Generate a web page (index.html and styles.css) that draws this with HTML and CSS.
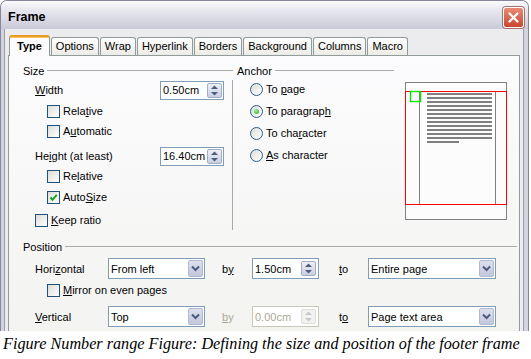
FILE: index.html
```
<!DOCTYPE html>
<html lang="en">
<head>
  <meta charset="UTF-8" />
  <title>Frame</title>
  <link rel="stylesheet" href="styles.css">
</head>
<body>

  <div class="dialog">
    <div class="titlebar">
      <span class="title">Frame</span>
      <span class="close">
        <svg width="19" height="19" viewBox="0 0 19 19"><path d="M5.5 5.5L13.5 13.5M13.5 5.5L5.5 13.5" stroke="#fff" stroke-width="2.2" stroke-linecap="round"/></svg>
      </span>
    </div>

    <div class="client">
      <!-- tab row -->
      <div class="tabs">
        <div class="tab active">Type</div>
        <div class="tab">Options</div>
        <div class="tab">Wrap</div>
        <div class="tab">Hyperlink</div>
        <div class="tab">Borders</div>
        <div class="tab">Background</div>
        <div class="tab">Columns</div>
        <div class="tab">Macro</div>
      </div>

      <div class="panel">
        <div class="top">

          <!-- Size -->
          <div class="size">
            <div class="legend"><span>Size</span><i></i></div>
            <div class="size-body">
              <div class="row">
                <span><u>W</u>idth</span>
                <div class="spin">0.50cm<span class="spin-btn"><svg width="9" height="13" viewBox="0 0 9 13"><path d="M1 5L4.5 1.5L8 5Z" /><path d="M1 8L4.5 11.5L8 8Z" /></svg></span></div>
              </div>
              <div class="row sub"><span class="check"></span><span>Rela<u>t</u>ive</span></div>
              <div class="row sub"><span class="check"></span><span>A<u>u</u>tomatic</span></div>
              <div class="row">
                <span>He<u>i</u>ght (at least)</span>
                <div class="spin">16.40cm<span class="spin-btn"><svg width="9" height="13" viewBox="0 0 9 13"><path d="M1 5L4.5 1.5L8 5Z" /><path d="M1 8L4.5 11.5L8 8Z" /></svg></span></div>
              </div>
              <div class="row sub"><span class="check"></span><span>Re<u>l</u>ative</span></div>
              <div class="row sub">
                <span class="check"><svg width="11" height="11" viewBox="0 0 11 11"><path d="M2.5 5.5L4.5 7.8L8.8 2.8" fill="none" stroke="#21a121" stroke-width="2"/></svg></span>
                <span>Auto<u>S</u>ize</span>
              </div>
              <div class="row"><span class="check"></span><span><u>K</u>eep ratio</span></div>
            </div>
          </div>

          <!-- Anchor -->
          <div class="anchor">
            <div class="legend"><span>Anchor</span><i></i></div>
            <div class="anchor-body">
              <div class="radio-row"><span class="radio"></span><span>To <u>p</u>age</span></div>
              <div class="radio-row"><span class="radio on"></span><span>To paragrap<u>h</u></span></div>
              <div class="radio-row"><span class="radio"></span><span>To cha<u>r</u>acter</span></div>
              <div class="radio-row"><span class="radio"></span><span><u>A</u>s character</span></div>
            </div>
          </div>

          <!-- page preview -->
          <div class="preview">
            <svg width="102" height="138" viewBox="0 0 102 138">
              <rect x="0.5" y="0.5" width="101" height="137" fill="#fcfcfc" stroke="#808080"/>
              <path d="M14.5 10V122M90.5 10V122" stroke="#808080"/>
              <g fill="#808080">
                <rect x="22" y="11" width="65" height="2"/>
                <rect x="22" y="15" width="65" height="2"/>
                <rect x="22" y="19" width="65" height="2"/>
                <rect x="22" y="23" width="65" height="2"/>
                <rect x="22" y="27" width="65" height="2"/>
                <rect x="22" y="31" width="65" height="2"/>
                <rect x="22" y="35" width="65" height="2"/>
                <rect x="22" y="39" width="65" height="2"/>
                <rect x="22" y="43" width="65" height="2"/>
                <rect x="22" y="47" width="65" height="2"/>
                <rect x="22" y="51" width="65" height="2"/>
                <rect x="22" y="55" width="65" height="2"/>
                <rect x="22" y="59" width="32" height="2"/>
              </g>
              <rect x="0.5" y="9.5" width="101" height="113" fill="none" stroke="#ff0000"/>
              <rect x="5.5" y="9.5" width="10" height="10" fill="none" stroke="#00e600" stroke-width="1.4"/>
            </svg>
          </div>
        </div>

        <!-- Position -->
        <div class="position">
          <div class="legend"><span>Position</span><i></i></div>
          <div class="pos-grid">
            <span>Hori<u>z</u>ontal</span>
            <div class="combo">From left<span class="dd-btn"><svg width="9" height="7" viewBox="0 0 9 7"><path d="M1 1.5L4.5 5L8 1.5" fill="none" stroke="#4a5a80" stroke-width="2"/></svg></span></div>
            <span class="by">b<u>y</u></span>
            <div class="spin">1.50cm<span class="spin-btn"><svg width="9" height="13" viewBox="0 0 9 13"><path d="M1 5L4.5 1.5L8 5Z" /><path d="M1 8L4.5 11.5L8 8Z" /></svg></span></div>
            <span class="to"><u>t</u>o</span>
            <div class="combo">Entire page<span class="dd-btn"><svg width="9" height="7" viewBox="0 0 9 7"><path d="M1 1.5L4.5 5L8 1.5" fill="none" stroke="#4a5a80" stroke-width="2"/></svg></span></div>

            <div class="mirror"><span class="check"></span><span><u>M</u>irror on even pages</span></div>

            <span><u>V</u>ertical</span>
            <div class="combo">Top<span class="dd-btn"><svg width="9" height="7" viewBox="0 0 9 7"><path d="M1 1.5L4.5 5L8 1.5" fill="none" stroke="#4a5a80" stroke-width="2"/></svg></span></div>
            <span class="by disabled"><u>b</u>y</span>
            <div class="spin disabled">0.00cm<span class="spin-btn"><svg width="9" height="13" viewBox="0 0 9 13"><path d="M1 5L4.5 1.5L8 5Z" /><path d="M1 8L4.5 11.5L8 8Z" /></svg></span></div>
            <span class="to">t<u>o</u></span>
            <div class="combo">Page text area<span class="dd-btn"><svg width="9" height="7" viewBox="0 0 9 7"><path d="M1 1.5L4.5 5L8 1.5" fill="none" stroke="#4a5a80" stroke-width="2"/></svg></span></div>
          </div>
        </div>
      </div>
    </div>
  </div>

  <p class="caption">Figure Number range Figure: Defining the size and position of the footer frame</p>

</body>
</html>
```

FILE: styles.css
```
body {
  margin: 0;
  background: #fff;
  font-family: "Liberation Sans", Arial, sans-serif;
  font-size: 11px;
  color: #000;
}
u {
  text-decoration-thickness: 1px;
  text-underline-offset: 1px;
}
.dialog {
  width: 529px;
  height: 331px;
  box-sizing: border-box;
  border: 1px solid #85859b;
  border-bottom: none;
  border-radius: 7px 7px 0 0;
  background: #d3d3de;
  overflow: hidden;
}
.titlebar {
  height: 28px;
  box-sizing: border-box;
  display: flex;
  align-items: center;
  padding: 4px 4px 0 7px;
  background: linear-gradient(#fbfbfd 0%, #e8e8ef 30%, #d8d8e3 70%, #cacad8 100%);
}
.title {
  font-weight: bold;
  font-size: 12.5px;
}
.close {
  margin-left: auto;
  width: 21px;
  height: 21px;
  box-sizing: border-box;
  border: 1px solid #fff;
  border-radius: 3px;
  background: linear-gradient(#e98a76, #c9462e);
  box-shadow: 0 0 0 1px #a8706a;
  display: flex;
}
.client {
  margin: 0 4px 0 3px;
  border-left: 1px solid #9c9cb0;
  border-right: 1px solid #9c9cb0;
  background: #ececef;
  padding: 6px 3px 0;
  height: 320px;
}

/* tabs */
.tabs {
  display: flex;
  align-items: flex-end;
  height: 20px;
  padding-left: 1px;
  position: relative;
  z-index: 1;
}
.tab {
  height: 18px;
  box-sizing: border-box;
  padding: 0 4px;
  margin-right: 1px;
  border: 1px solid #919b9c;
  border-bottom: none;
  border-radius: 3px 3px 0 0;
  background: linear-gradient(#fff, #ecebe6);
  line-height: 17px;
}
.tab.active {
  height: 21px;
  margin-bottom: -1px;
  padding: 0 7px;
  border-top: 2px solid #e69a2a;
  box-shadow: inset 0 1px #ffc95a;
  background: #fcfcfe;
  font-weight: bold;
  line-height: 18px;
}
.panel {
  border: 1px solid #919b9c;
  background: linear-gradient(#fcfcfe, #f2f2ef);
  padding: 8px 2px 0 14px;
  height: 300px;
}

/* group boxes */
.legend {
  display: flex;
  align-items: center;
  gap: 3px;
  height: 13px;
}
.legend i {
  flex: 1;
  height: 1px;
  background: #a9a9a9;
}
.top {
  display: flex;
  align-items: flex-start;
}
.size {
  width: 210px;
}
.size-body {
  display: grid;
  grid-template-rows: 21px 20px 25px 20px 21px 23px 20px;
  margin-top: 3px;
  border-right: 1px solid #a9a9a9;
}
.row {
  display: flex;
  align-items: center;
  height: 20px;
  padding-left: 12px;
}
.row.sub {
  padding-left: 24px;
}
.anchor {
  width: 157px;
  margin-left: 4px;
}
.anchor-body {
  margin-top: 1px;
}
.radio-row {
  display: flex;
  align-items: center;
  height: 22px;
  padding-left: 13px;
}
.preview {
  margin: 18px 0 0 11px;
  display: flex;
}

/* controls */
.check {
  width: 13px;
  height: 13px;
  box-sizing: border-box;
  border: 1px solid #1c5180;
  background: linear-gradient(135deg, #dcdcd7, #fff);
  margin-right: 3px;
  flex: none;
  display: flex;
  align-items: center;
  justify-content: center;
}
.radio {
  width: 13px;
  height: 13px;
  box-sizing: border-box;
  border: 1px solid #2a5a8a;
  border-radius: 50%;
  background: linear-gradient(135deg, #dcdcd7, #fff);
  margin-right: 3px;
  flex: none;
  display: flex;
  align-items: center;
  justify-content: center;
}
.radio.on::after {
  content: "";
  width: 5px;
  height: 5px;
  border-radius: 50%;
  background: radial-gradient(circle at 40% 35%, #9ef09e, #21a121);
}
.spin {
  margin-left: auto;
  margin-right: 8px;
  width: 64px;
  height: 19px;
  box-sizing: border-box;
  border: 1px solid #7f9db9;
  background: #fff;
  display: flex;
  align-items: center;
  padding-left: 2px;
}
.spin-btn {
  margin-left: auto;
  margin-right: 1px;
  width: 15px;
  height: 15px;
  box-sizing: border-box;
  border: 1px solid #a4acc4;
  border-radius: 2px;
  background: linear-gradient(#eef0f7, #c9cfe2);
  display: flex;
  align-items: center;
  justify-content: center;
  fill: #4d5b7c;
}
.spin.disabled {
  border-color: #c9c7ba;
  color: #aca899;
}
.spin.disabled .spin-btn {
  border-color: #dcdcdc;
  background: #f2f2f2;
  fill: #c8c8c8;
}
.combo {
  height: 21px;
  box-sizing: border-box;
  border: 1px solid #7f9db9;
  background: #fff;
  display: flex;
  align-items: center;
  padding-left: 2px;
}
.dd-btn {
  margin-left: auto;
  margin-right: 1px;
  width: 15px;
  height: 17px;
  box-sizing: border-box;
  border: 1px solid #b4b9d0;
  border-radius: 2px;
  background: linear-gradient(#dcdfec, #c3c7dc);
  display: flex;
  align-items: center;
  justify-content: center;
}

/* position */
.position {
  margin-top: 10px;
}
.pos-grid {
  display: grid;
  grid-template-columns: 73px 97px 47px 67px 49px 128px;
  grid-template-rows: 21px 27px 21px;
  align-items: center;
  margin-top: 5px;
  padding-left: 12px;
}
.pos-grid .spin {
  margin: 0;
  width: 67px;
  height: 21px;
}
.pos-grid .spin-btn {
  margin-right: 2px;
}
.by {
  padding-left: 17px;
}
.to {
  padding-left: 20px;
}
.disabled {
  color: #aca899;
}
.mirror {
  grid-column: 1 / -1;
  align-self: start;
  display: flex;
  align-items: center;
  height: 22px;
  padding-left: 12px;
}

.caption {
  margin: 0;
  padding: 3px 0 0 3px;
  font-family: "Liberation Serif", "Times New Roman", serif;
  font-style: italic;
  font-size: 16.2px;
  line-height: 21px;
  white-space: nowrap;
}
```
